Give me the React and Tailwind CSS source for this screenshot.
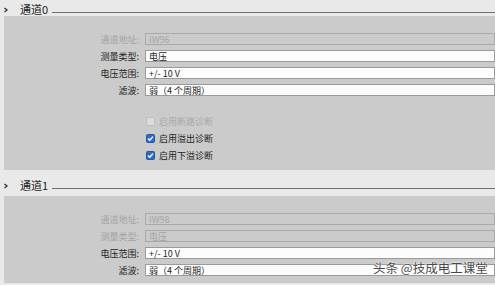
import React from "react";

const font = { fontFamily: '"Noto Sans CJK SC", "Liberation Sans", sans-serif' };

function Chevron() {
  return (
    <svg width="6" height="6" viewBox="0 0 6 6" className="shrink-0">
      <path d="M1.5 1 L4 3 L1.5 5" fill="none" stroke="#333" strokeWidth="1.3" />
    </svg>
  );
}

function Header({ title }) {
  return (
    <div className="flex h-[15px] items-center">
      <div className="w-[20px] flex pl-[3px] pt-[1px]"><Chevron /></div>
      <span className="text-[11px] leading-none text-[#222] w-[32px]">{title}</span>
      <div className="flex-1 h-px bg-[#6f6f6f] mt-[5px]" />
    </div>
  );
}

function Row({ label, value, labelDisabled, fieldDisabled }) {
  return (
    <div className="flex h-[12px] items-center">
      <div
        className={
          "w-[135px] text-right text-[9px] leading-none " +
          (labelDisabled ? "text-[#a3a3a3]" : "text-[#1e1e1e]")
        }
      >
        {label}
      </div>
      <div
        className={
          "ml-[6px] flex-1 h-[12px] flex items-center pl-[3px] text-[9px] leading-none border " +
          (fieldDisabled
            ? "bg-[#cbcbcb] border-[#a9a9a9] text-[#a6a6a6]"
            : "bg-[#fcfcfc] border-[#9a9a9a] text-[#1e1e1e]")
        }
      >
        {value}
      </div>
    </div>
  );
}

function Check({ checked, disabled, label }) {
  return (
    <div className="flex items-center h-[9px] pl-[142px]">
      {checked ? (
        <svg width="9" height="9" viewBox="0 0 9 9">
          <rect x="0.5" y="0.5" width="8" height="8" rx="1" fill="#2e6cc9" stroke="#25569e" />
          <path d="M2 4.6 L3.7 6.2 L7 2.6" fill="none" stroke="#fff" strokeWidth="1.4" />
        </svg>
      ) : (
        <svg width="9" height="9" viewBox="0 0 9 9">
          <rect x="0.5" y="0.5" width="8" height="8" rx="1" fill="#dcdcdc" stroke="#bdbdbd" />
        </svg>
      )}
      <span
        className={
          "ml-[4px] text-[9px] leading-none " +
          (disabled ? "text-[#a9a9a9]" : "text-[#1e1e1e]")
        }
      >
        {label}
      </span>
    </div>
  );
}

export default function App() {
  return (
    <div
      className="relative w-[495px] h-[285px] overflow-hidden bg-[#e9e9e9]"
      style={font}
    >
      <div className="pt-[2px]">
        <Header title="通道0" />
      </div>
      <div className="ml-[4px] mt-[-1px] h-[154px] bg-[#cbcbcb] pt-[17px] flex flex-col">
        <div className="flex flex-col gap-[5px]">
          <Row label="通道地址:" value="IW96" labelDisabled fieldDisabled />
          <Row label="测量类型:" value="电压" />
          <Row label="电压范围:" value="+/- 10 V" />
          <Row label="滤波:" value="弱（4 个周期）" />
        </div>
        <div className="mt-[21px] flex flex-col gap-[8px]">
          <Check disabled label="启用断路诊断" />
          <Check checked label="启用溢出诊断" />
          <Check checked label="启用下溢诊断" />
        </div>
      </div>
      <div className="mt-[8px]">
        <Header title="通道1" />
      </div>
      <div className="ml-[4px] mt-[3px] h-[87px] bg-[#cbcbcb] pt-[17px]">
        <div className="flex flex-col gap-[5px]">
          <Row label="通道地址:" value="IW98" labelDisabled fieldDisabled />
          <Row label="测量类型:" value="电压" labelDisabled fieldDisabled />
          <Row label="电压范围:" value="+/- 10 V" />
          <Row label="滤波:" value="弱（4 个周期）" />
        </div>
      </div>
      <div
        className="absolute left-[373px] top-[262px] text-[12.5px] leading-none text-[#4a4a4a]"
        style={{ textShadow: "0 0 2px #fff, 0 0 2px #fff" }}
      >
        头条 @技成电工课堂
      </div>
    </div>
  );
}
